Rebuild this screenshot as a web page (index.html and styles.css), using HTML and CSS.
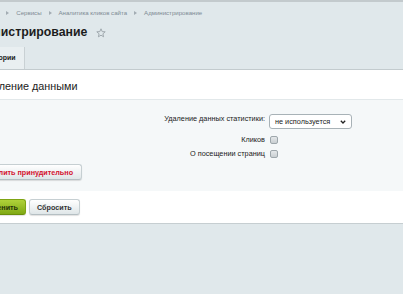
FILE: index.html
```html
<!DOCTYPE html>
<html lang="ru">
<head>
    <meta charset="UTF-8">
    <meta name="viewport" content="width=device-width, initial-scale=1.0">
    <title>Администрирование</title>
    <link rel="stylesheet" href="styles.css">
</head>
<body>
    <div class="page">
        <div class="breadcrumbs">
            <span class="crumb">Рабочий стол</span><span class="sep"></span>
            <span class="crumb">Сервисы</span><span class="sep"></span>
            <span class="crumb">Аналитика кликов сайта</span><span class="sep"></span>
            <span class="crumb">Администрирование</span>
        </div>

        <h1 class="title">Администрирование
            <svg class="star" width="10" height="10" viewBox="0 0 10 10">
                <path d="M5 0.8 L6.2 3.6 L9.2 3.8 L6.9 5.8 L7.6 8.8 L5 7.2 L2.4 8.8 L3.1 5.8 L0.8 3.8 L3.8 3.6 Z" fill="none" stroke="#9aa3a8" stroke-width="0.9" stroke-linejoin="round"/>
            </svg>
        </h1>

        <div class="tabs">
            <div class="tab active">Очистка истории</div>
        </div>

        <div class="panel">
            <div class="panel-head">Управление данными</div>
            <div class="panel-body">
                <div class="form-row">
                    <label class="field-label" for="period">Удаление данных статистики:</label>
                    <div class="select-wrap">
                        <select id="period" class="select">
                            <option>не используется</option>
                        </select>
                        <svg class="chevron" width="6" height="4" viewBox="0 0 6 4">
                            <path d="M0.8 0.8 L3 3 L5.2 0.8" fill="none" stroke="#222" stroke-width="1.3"/>
                        </svg>
                    </div>
                </div>
                <div class="form-row check-row">
                    <label class="field-label" for="clicks">Кликов</label>
                    <input type="checkbox" id="clicks" class="check">
                </div>
                <div class="form-row check-row">
                    <label class="field-label" for="visits">О посещении страниц</label>
                    <input type="checkbox" id="visits" class="check">
                </div>
                <div class="inline-actions">
                    <button class="btn btn-danger">Удалить принудительно</button>
                </div>
            </div>
            <div class="panel-foot">
                <button class="btn btn-save">Применить</button>
                <button class="btn">Сбросить</button>
            </div>
        </div>
    </div>
</body>
</html>
```

FILE: styles.css
```css
html, body {
    margin: 0;
    padding: 0;
}
body {
    font-family: "Liberation Sans", Arial, sans-serif;
    background: #e0e8eb;
    color: #222;
    width: 403px;
    height: 294px;
    overflow: hidden;
    border-top: 2px solid #c3cacd;
    box-sizing: border-box;
}
.page {
    margin-left: -60px;
    width: 800px;
}
.breadcrumbs {
    padding: 6px 0 0 21px;
    height: 10px;
    line-height: 10px;
    font-size: 6.1px;
    color: #7d8a93;
    display: flex;
    align-items: center;
}
.sep {
    width: 0;
    height: 0;
    border-left: 3px solid #a3adb3;
    border-top: 2px solid transparent;
    border-bottom: 2px solid transparent;
    margin: 0 7px;
}
.title {
    margin: 6px 0 0;
    padding-left: 20px;
    height: 17px;
    line-height: 17px;
    font-size: 12.3px;
    font-weight: bold;
    color: #1c1c1c;
    display: flex;
    align-items: center;
}
.star {
    margin-left: 9px;
}
.tabs {
    display: flex;
    margin: 6px 0 0 7.5px;
}
.tab {
    height: 22px;
    line-height: 22px;
    padding: 0 8px 0 9px;
    font-size: 7px;
    font-weight: bold;
    color: #1c1c1c;
    background: #e9eff1;
    border-right: 1px solid #c9d1d4;
    box-sizing: border-box;
    white-space: nowrap;
}
.panel {
    margin-left: 20px;
    background: #fff;
    border-top: 1px solid #c3cbce;
    border-bottom: 1px solid #c6ced1;
}
.panel-head {
    height: 30px;
    padding: 3px 0 0 9px;
    box-sizing: border-box;
    line-height: 27px;
    font-size: 10.8px;
    color: #222;
    border-bottom: 1px solid #e2e8ea;
}
.panel-body {
    background: #f5f8f9;
    padding: 14px 0 11px;
}
.form-row {
    display: grid;
    grid-template-columns: 305px auto;
    column-gap: 4px;
    align-items: start;
}
.field-label {
    text-align: right;
    font-size: 7.3px;
    line-height: 10px;
    color: #222;
}
.check-row {
    margin-top: 7px;
    align-items: center;
}
.check-row + .check-row {
    margin-top: 6px;
}
.check-row .field-label {
    line-height: 8px;
}
.select-wrap {
    position: relative;
    width: 83px;
}
.select {
    -webkit-appearance: none;
    appearance: none;
    display: block;
    width: 83px;
    height: 15px;
    padding: 0 0 0 5px;
    margin: 0;
    font-family: "Liberation Sans", Arial, sans-serif;
    font-size: 7.3px;
    color: #222;
    background: #fff;
    border: 1px solid #a8b2b7;
    border-radius: 3px;
}
.chevron {
    position: absolute;
    right: 6px;
    top: 6px;
}
.check {
    -webkit-appearance: none;
    appearance: none;
    width: 8px;
    height: 8px;
    margin: 0 0 0 1px;
    border: 1px solid #9ea7ac;
    border-radius: 2px;
    background: linear-gradient(#e4e8ea, #c9cfd2);
    box-sizing: border-box;
}
.inline-actions {
    display: flex;
    margin: 6px 0 0 17px;
}
.btn {
    height: 16px;
    padding: 0 7px;
    font-family: "Liberation Sans", Arial, sans-serif;
    font-size: 7.2px;
    font-weight: bold;
    color: #333;
    background: linear-gradient(#ffffff, #dfe6e8);
    border: 1px solid #c6cfd2;
    border-bottom-color: #b5bfc3;
    border-radius: 3px;
    box-shadow: 0 1px 1px rgba(0, 0, 0, 0.12);
    cursor: pointer;
}
.btn-danger {
    padding: 0 8px;
    color: #d3112e;
}
.panel-foot {
    background: #fff;
    height: 32px;
    padding: 8px 0 0 10px;
    box-sizing: border-box;
    display: flex;
    align-items: flex-start;
    gap: 3px;
}
.btn-save {
    color: #26330a;
    background: linear-gradient(#b0d23a, #7fa914);
    border-color: #7fa414;
    border-bottom-color: #6a8e0b;
}
```
